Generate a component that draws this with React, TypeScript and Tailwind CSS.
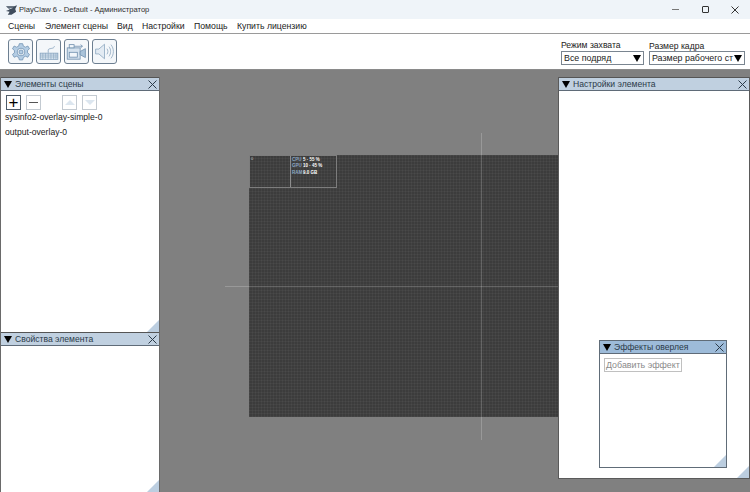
const menus = [
  { label: "Сцены", width: "w-[37px]" },
  { label: "Элемент сцены", width: "w-[72px]" },
  { label: "Вид", width: "w-[25px]" },
  { label: "Настройки", width: "w-[52px]" },
  { label: "Помощь", width: "w-[43px]" },
  { label: "Купить лицензию", width: "w-[72px]" },
];

const stats = [
  { name: "CPU", value: "5 · 55 %" },
  { name: "GPU", value: "10 · 45 %" },
  { name: "RAM", value: "9.0 GB" },
];

function GearIcon() {
  return (
    <svg width="20" height="20" viewBox="0 0 24 24" fill="#b4cde4" stroke="#7595b4" strokeWidth="1">
      <path d="M10 2h4l.8 3 2.600 1.200 2.800-1.400 2 3.400-2.400 2 .1 2.800 2.300 1.900-2 3.400-2.800-1.200-2.600 1.400-.8 3h-4l-.8-3-2.600-1.400-2.800 1.200-2-3.400 2.300-1.900.1-2.800-2.400-2 2-3.400 2.800 1.400L9.200 5z" />
      <circle cx="12" cy="12" r="4.600" fill="#eef3f8" />
      <circle cx="12" cy="12" r="2.400" fill="#b4cde4" />
    </svg>
  );
}

function KeyboardIcon() {
  return (
    <svg width="20" height="20" viewBox="0 0 26 24" fill="none" stroke="#7f9dba" strokeWidth="1">
      <path d="M12 13V9.500c0-3 8-1 8-5" />
      <rect x="1.500" y="13.500" width="23" height="8" fill="#dbe7f1" />
      <path
        d="M1.500 16h23M1.500 18.500h23M5 13.500v8M8.500 13.500v8M12 13.500v8M15.500 13.500v8M19 13.500v8M22 13.500v8"
        strokeWidth="0.7"
      />
    </svg>
  );
}

function CameraIcon() {
  return (
    <svg width="21" height="21" viewBox="0 0 26 24" fill="#d5e2ee" stroke="#6f8fae" strokeWidth="1">
      <rect x="1.500" y="7.500" width="16" height="14" />
      <path d="M17.500 12l6.500-3.500v11l-6.500-3.500z" fill="#a9c3da" />
      <rect x="4" y="3.500" width="6" height="4" fill="#f2f6fa" />
      <path d="M10 5.500h10M18 3.500l2.500 2-2.500 2" fill="none" />
      <rect x="4" y="13" width="10" height="6" fill="#f2f6fa" />
    </svg>
  );
}

function SpeakerIcon() {
  return (
    <svg width="21" height="21" viewBox="0 0 26 24" fill="#e3ebf3" stroke="#8ea8c0" strokeWidth="1">
      <path d="M2 9h4l7-6v18l-7-6H2z" />
      <path d="M16 8.500c1.600 2 1.600 5 0 7M18.500 6c2.800 3.500 2.800 8.500 0 12M21 3.500c4 5 4 12 0 17" fill="none" />
    </svg>
  );
}

function ToolButton({ children }: { children: React.ReactNode }) {
  return (
    <div className="flex h-[25px] w-[25px] items-center justify-center overflow-hidden rounded-[3px] border border-[#6d7f91] bg-[#f4f7fa]">
      {children}
    </div>
  );
}

function CloseMark() {
  return (
    <svg width="9" height="9" viewBox="0 0 9 9" stroke="#2b3a48" strokeWidth="1" className="shrink-0">
      <path d="M0.500 0.500l8 8M8.500 0.500l-8 8" />
    </svg>
  );
}

function PanelTitle({ title, active }: { title: string; active?: boolean }) {
  return (
    <div
      className={`flex h-[13px] shrink-0 items-center border-b border-[#5f6b78] pl-[3px] pr-[2px] text-[8.600px] leading-none text-[#2b3a48] ${
        active ? "bg-[#9dbbd9]" : "bg-[#c0d0e0]"
      }`}
    >
      <span className="mr-[3px] h-0 w-0 border-x-[4px] border-t-[7px] border-x-transparent border-t-black" />
      <span className="flex-1 whitespace-nowrap">{title}</span>
      <CloseMark />
    </div>
  );
}

function Grip() {
  return (
    <div className="absolute bottom-0 right-0 h-[12px] w-[12px] bg-[#bccee0] [clip-path:polygon(100%_0,100%_100%,0_100%)]" />
  );
}

function SmallButton({ children, dim }: { children: React.ReactNode; dim?: boolean }) {
  return (
    <div
      className={`flex h-[15px] w-[15px] items-center justify-center border bg-white ${
        dim ? "border-[#c3cad1]" : "border-[#4f5c69]"
      }`}
    >
      {children}
    </div>
  );
}

function Select({ label, value, width, drop }: { label: string; value: string; width: string; drop: string }) {
  return (
    <div className={`flex flex-col ${width}`}>
      <span className={`text-[8.600px] leading-[11px] text-[#222] ${drop}`}>{label}</span>
      <div className="flex h-[14px] items-center border border-[#7a8590] pl-[2px] pr-[2px] text-[8.900px] leading-none text-[#222]">
        <span className="flex-1 whitespace-nowrap">{value}</span>
        <span className="h-0 w-0 shrink-0 border-x-[4px] border-t-[7px] border-x-transparent border-t-black" />
      </div>
    </div>
  );
}

export default function App() {
  return (
    <div className="flex h-[492px] w-[750px] flex-col overflow-hidden bg-[#808080] font-['Liberation_Sans',sans-serif]">
      <header className="flex h-[19px] shrink-0 items-center bg-[#eff4f9] pl-[5px]">
        <svg width="13" height="12" viewBox="0 0 14 12" className="mr-[1px]">
          <path d="M1 2h9l3-1-2 4 1 3-5 3H3l2-3-4-1 4-1.500z" fill="#3f4c5c" />
          <path d="M3 3.500h6L6 5z" fill="#c8d2dc" />
        </svg>
        <span className="text-[7.600px] leading-none text-[#2d2d2d]">PlayClaw 6 - Default - Администратор</span>
        <div className="ml-auto flex items-center">
          <div className="flex w-[30px] justify-center">
            <span className="h-px w-[7px] bg-[#777]" />
          </div>
          <div className="flex w-[30px] justify-center">
            <span className="h-[7px] w-[7px] rounded-[1px] border border-[#333]" />
          </div>
          <div className="flex w-[30px] justify-center">
            <svg width="8" height="8" viewBox="0 0 8 8" stroke="#333" strokeWidth="1">
              <path d="M0.500 0.500l7 7M7.500 0.500l-7 7" />
            </svg>
          </div>
        </div>
      </header>

      <nav className="flex h-[14px] shrink-0 items-center bg-white pl-[8px] text-[8.700px] leading-none text-[#222]">
        {menus.map((menu) => (
          <span key={menu.label} className={`whitespace-nowrap ${menu.width}`}>
            {menu.label}
          </span>
        ))}
      </nav>

      <div className="flex h-[37px] shrink-0 items-start justify-between border-y border-t-[#9a9a9a] border-b-[#8a8a8a] bg-white pl-[8px] pr-[5px]">
        <div className="mt-[5px] flex gap-[3px]">
          <ToolButton>
            <GearIcon />
          </ToolButton>
          <ToolButton>
            <KeyboardIcon />
          </ToolButton>
          <ToolButton>
            <CameraIcon />
          </ToolButton>
          <ToolButton>
            <SpeakerIcon />
          </ToolButton>
        </div>
        <div className="mt-[6px] flex items-end gap-[5px]">
          <Select label="Режим захвата" value="Все подряд" width="w-[83px]" drop="" />
          <Select label="Размер кадра" value="Размер рабочего ст" width="w-[96px]" drop="mb-[-1px]" />
        </div>
      </div>

      <main className="flex min-h-0 flex-1 items-stretch pt-[7px]">
        <aside className="flex h-[415px] w-[160px] shrink-0 flex-col border-x border-l-[#6a6a6a] border-r-[#6a6a6a] bg-white">
          <section className="relative flex h-[256px] flex-col border-b border-[#555]">
            <div className="h-px bg-[#555]" />
            <PanelTitle title="Элементы сцены" />
            <div className="flex pl-[5px] pt-[4px]">
              <SmallButton>
                <span className="text-[17px] leading-none text-black">+</span>
              </SmallButton>
              <div className="ml-[5px]">
                <SmallButton dim>
                  <span className="h-px w-[9px] bg-[#555]" />
                </SmallButton>
              </div>
              <div className="ml-[21px]">
                <SmallButton dim>
                  <span className="h-0 w-0 border-x-[5px] border-b-[5px] border-x-transparent border-b-[#dce6ef]" />
                </SmallButton>
              </div>
              <div className="ml-[5px]">
                <SmallButton dim>
                  <span className="h-0 w-0 border-x-[5px] border-t-[5px] border-x-transparent border-t-[#dce6ef]" />
                </SmallButton>
              </div>
            </div>
            <div className="pl-[4px] text-[8.600px] leading-[15px] text-[#222]">
              <div>sysinfo2-overlay-simple-0</div>
              <div>output-overlay-0</div>
            </div>
            <Grip />
          </section>
          <section className="relative flex flex-1 flex-col">
            <PanelTitle title="Свойства элемента" />
            <Grip />
          </section>
        </aside>

        <div className="relative flex-1 overflow-hidden">
          {/* scene preview */}
          <div className="absolute left-[89px] top-[78px] h-[262px] w-[320px] bg-[#3c3c3c] bg-[repeating-linear-gradient(90deg,rgba(255,255,255,0.035)_0_1px,transparent_1px_3px),repeating-linear-gradient(0deg,rgba(255,255,255,0.035)_0_1px,transparent_1px_3px)]" />
          <div className="absolute left-[89px] top-[78px] flex h-[33px] w-[88px] border border-[#7d7d7d]">
            <div className="w-[41px] border-r border-[#8d8d8d] pl-[1px] text-[4px] leading-[6px] text-[#ccc]">0</div>
            <div className="flex-1 pl-[1px] pt-px font-bold">
              {stats.map((stat) => (
                <div key={stat.name} className="flex h-[6.500px] items-center gap-[3px] text-[4.500px] text-white">
                  <span className="w-[8px] text-[#8fa9c2]">{stat.name}</span>
                  <span>{stat.value}</span>
                </div>
              ))}
            </div>
          </div>
          <div className="absolute left-[321px] top-[56px] h-[307px] w-px bg-white/20" />
          <div className="absolute left-[65px] top-[209px] h-px w-[333px] bg-white/20" />
        </div>

        <aside className="relative flex h-[402px] w-[192px] shrink-0 flex-col border-x border-b border-[#5a5a5a] bg-white">
          <div className="h-px bg-[#555]" />
          <PanelTitle title="Настройки элемента" />
          <Grip />
          <section className="absolute left-[40px] top-[263px] flex h-[128px] w-[128px] flex-col border border-[#606c78] bg-white">
            <PanelTitle title="Эффекты оверлея" active />
            <div className="p-[4px]">
              <div className="w-fit border border-[#c0c0c0] px-[1px] text-[8.900px] leading-[12px] text-[#8a8a8a]">
                Добавить эффект
              </div>
            </div>
            <Grip />
          </section>
        </aside>
      </main>
    </div>
  );
}
